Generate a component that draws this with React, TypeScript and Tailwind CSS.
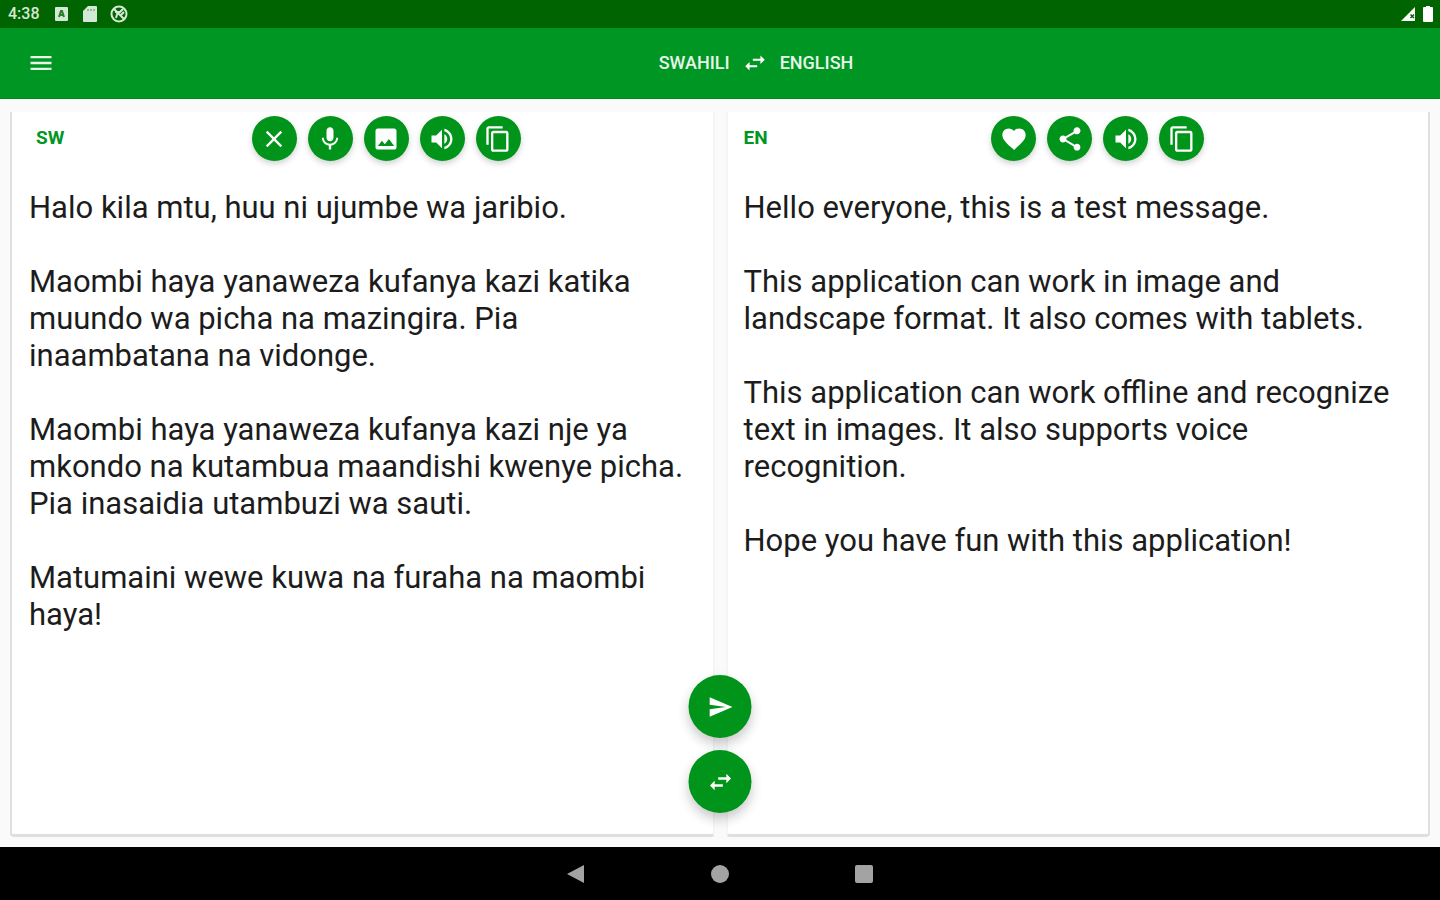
import React from "react";
import {
  MdClose,
  MdContentCopy,
  MdFavorite,
  MdImage,
  MdMenu,
  MdMic,
  MdSend,
  MdShare,
  MdSwapHoriz,
  MdVolumeUp,
} from "react-icons/md";

const sourceText = `Halo kila mtu, huu ni ujumbe wa jaribio.

Maombi haya yanaweza kufanya kazi katika muundo wa picha na mazingira. Pia inaambatana na vidonge.

Maombi haya yanaweza kufanya kazi nje ya mkondo na kutambua maandishi kwenye picha. Pia inasaidia utambuzi wa sauti.

Matumaini wewe kuwa na furaha na maombi haya!`;

const translatedText = `Hello everyone, this is a test message.

This application can work in image and landscape format. It also comes with tablets.

This application can work offline and recognize text in images. It also supports voice recognition.

Hope you have fun with this application!`;

function RoundButton({
  label,
  children,
}: Readonly<{ label: string; children: React.ReactNode }>) {
  return (
    <button
      type="button"
      aria-label={label}
      className="flex items-center justify-center size-[45px] rounded-full bg-[#00941a] text-white shadow-[0_3px_6px_rgba(0,0,0,0.18)]"
    >
      {children}
    </button>
  );
}

function Fab({
  label,
  children,
}: Readonly<{ label: string; children: React.ReactNode }>) {
  return (
    <button
      type="button"
      aria-label={label}
      className="flex items-center justify-center size-[63px] rounded-full bg-[#00941a] text-white shadow-[0_6px_12px_rgba(0,0,0,0.22)]"
    >
      {children}
    </button>
  );
}

function StatusBar() {
  return (
    <div className="flex items-center justify-between h-7 bg-[#006400] pl-2 pr-1 text-[#d5e8d5]">
      <div className="flex items-center">
        <span className="w-[46px] text-base leading-5 font-medium">4:38</span>
        <div className="flex items-center gap-3">
          <svg className="size-4" viewBox="0 0 16 16" aria-hidden="true">
            <rect x="1" y="1" width="13" height="14" rx="1" fill="currentColor" />
            <path
              d="M5 11 7 5h1L10 11M6 9h3"
              fill="none"
              stroke="#2c7d2c"
              strokeWidth="2"
            />
          </svg>
          <svg className="size-4" viewBox="0 0 16 16" aria-hidden="true">
            <path
              d="M6 0H14a1 1 0 0 1 1 1v14a1 1 0 0 1-1 1h-12A1 1 0 0 1 1 15V5z"
              fill="currentColor"
            />
            <path d="M6 3v2M9 3v2M12 3v2" stroke="#4c934c" />
          </svg>
          <svg className="size-[18px]" viewBox="0 0 18 18" aria-hidden="true">
            <g fill="none" stroke="currentColor" strokeWidth="2">
              <circle cx="9" cy="9" r="7.5" />
              <path d="M4 4 14 14M6 13 7.5 8M5 7h5L13 4M10 11l4-4" />
            </g>
          </svg>
        </div>
      </div>
      <div className="flex items-center gap-1 text-white">
        <svg className="size-4" viewBox="0 0 16 16" aria-hidden="true">
          <path d="M15 1v14H1z" fill="currentColor" />
          <path d="M10.500 8.500 14 12M14 8.500 10.500 12" stroke="#006400" strokeWidth="1.500" />
        </svg>
        <svg className="size-4" viewBox="0 0 16 16" aria-hidden="true">
          <path
            d="M6 0h4v1h2a1 1 0 0 1 1 1v13a1 1 0 0 1-1 1h-8a1 1 0 0 1-1-1v-13a1 1 0 0 1 1-1H6z"
            fill="currentColor"
          />
        </svg>
      </div>
    </div>
  );
}

export default function App() {
  return (
    <div className="flex flex-col min-h-screen bg-[#fafafa] font-['Roboto',sans-serif]">
      <StatusBar />
      <header className="flex items-center h-[71px] bg-[#009624] border-b border-[#008c0c] text-[#e6f5e8]">
        <button
          type="button"
          aria-label="Menu"
          className="flex items-center justify-end w-[72px] pr-[17px]"
        >
          <MdMenu className="size-7" />
        </button>
        <div className="flex flex-1 items-center justify-center gap-3 text-lg font-medium">
          <button type="button">SWAHILI</button>
          <button type="button" aria-label="Swap languages">
            <MdSwapHoriz className="size-[26px] text-white" />
          </button>
          <button type="button">ENGLISH</button>
        </div>
      </header>

      <main className="relative flex flex-1 gap-[11px] px-[10px] pt-[13px] pb-[10px]">
        <section className="flex flex-1 flex-col bg-white rounded-b border-l-2 border-b-3 border-r-2 border-l-[#dfdfdf] border-b-[#dfdfdf] border-r-[#f5f5f5]">
          <div className="flex items-center pt-1">
            <label
              htmlFor="source"
              className="w-12 shrink-0 pl-6 text-[19px] font-bold text-[#009624]"
            >
              SW
            </label>
            <div className="flex flex-1 justify-center gap-[11px]">
              <RoundButton label="Clear">
                <MdClose className="size-7" />
              </RoundButton>
              <RoundButton label="Speak">
                <MdMic className="size-7" />
              </RoundButton>
              <RoundButton label="Pick image">
                <MdImage className="size-7" />
              </RoundButton>
              <RoundButton label="Listen">
                <MdVolumeUp className="size-7" />
              </RoundButton>
              <RoundButton label="Copy">
                <MdContentCopy className="size-7" />
              </RoundButton>
            </div>
          </div>
          <textarea
            id="source"
            defaultValue={sourceText}
            spellCheck={false}
            className="flex-1 mt-7 pl-[17px] pr-3 text-[31px] leading-[37px] text-[#1c1c1c] resize-none outline-none"
          />
        </section>

        <section className="flex flex-1 flex-col bg-white rounded-b border-r-2 border-b-3 border-l-2 border-r-[#dfdfdf] border-b-[#dfdfdf] border-l-[#f5f5f5]">
          <div className="flex items-center pt-1">
            <label
              htmlFor="target"
              className="w-10 shrink-0 pl-4 text-[19px] font-bold text-[#009624]"
            >
              EN
            </label>
            <div className="flex flex-1 justify-center gap-[11px]">
              <RoundButton label="Favorite">
                <MdFavorite className="size-7" />
              </RoundButton>
              <RoundButton label="Share">
                <MdShare className="size-7" />
              </RoundButton>
              <RoundButton label="Listen to translation">
                <MdVolumeUp className="size-7" />
              </RoundButton>
              <RoundButton label="Copy translation">
                <MdContentCopy className="size-7" />
              </RoundButton>
            </div>
          </div>
          <textarea
            id="target"
            readOnly
            defaultValue={translatedText}
            spellCheck={false}
            className="flex-1 mt-7 pl-4 pr-3 text-[31px] leading-[37px] text-[#1c1c1c] resize-none outline-none"
          />
        </section>

        <div className="absolute bottom-[34px] left-1/2 flex flex-col gap-3 -translate-x-1/2">
          <Fab label="Translate">
            <MdSend className="size-[26px]" />
          </Fab>
          <Fab label="Swap texts">
            <MdSwapHoriz className="size-7" />
          </Fab>
        </div>
      </main>

      <nav className="flex justify-center h-[53px] bg-black text-[#a3a3a3]">
        <button type="button" aria-label="Back" className="flex items-center justify-center w-36">
          <svg className="size-5" viewBox="0 0 20 20">
            <path d="M18 1v18L1 10z" fill="currentColor" />
          </svg>
        </button>
        <button type="button" aria-label="Home" className="flex items-center justify-center w-36">
          <span className="size-[18px] rounded-full bg-[#a3a3a3]" />
        </button>
        <button type="button" aria-label="Recents" className="flex items-center justify-center w-36">
          <span className="size-[18px] rounded-xs bg-[#a3a3a3]" />
        </button>
      </nav>
    </div>
  );
}
